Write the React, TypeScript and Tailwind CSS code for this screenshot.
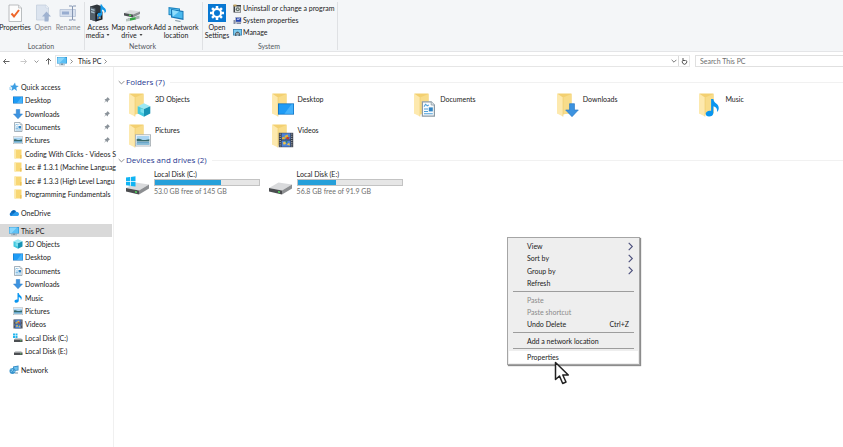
import type { ReactNode } from 'react';

type IconProps = { className?: string };

const small = 'size-[10px] shrink-0';

function MonitorIcon({ className = small }: IconProps) {
  return (
    <svg viewBox="0 0 20 20" className={className} aria-hidden="true">
      <rect x="0" y="2" width="20" height="13" fill="#2389c9" />
      <path d="M1 3h18v11H1z" fill="#5cc0f5" />
      <path d="M1 3h15L5 14H1z" fill="#8ad6fb" />
      <path d="M8 15h4v2H8zM4 17h12v1.500H4z" fill="#7c98ab" />
    </svg>
  );
}

function DesktopIcon({ className = small }: IconProps) {
  return (
    <svg viewBox="0 0 20 20" className={className} aria-hidden="true">
      <rect x="0" y="3" width="20" height="14" fill="#0f6fbd" />
      <rect x="1" y="4" width="18" height="12" fill="#1e9bf5" />
      <path d="M8 16L17 4h2v12z" fill="#45b2fb" />
    </svg>
  );
}

function DownArrowIcon({ className = small }: IconProps) {
  return (
    <svg viewBox="0 0 20 20" className={className} aria-hidden="true">
      <path d="M6.500 1h7v9H19l-9 9.500L1 10h5.500z" fill="#3c93e0" stroke="#2b7bc6" strokeWidth="1" />
    </svg>
  );
}

function DocumentIcon({ className = small }: IconProps) {
  return (
    <svg viewBox="0 0 20 20" className={className} aria-hidden="true">
      <path d="M3 1h11l4 4v14H3z" fill="#f8fbfd" stroke="#8b9aa5" strokeWidth="1.500" />
      <path d="M14 1v4h4" fill="#dfe6ea" stroke="#8b9aa5" />
      <path d="M5 7l2-3 2 2 2-1M5 10h5M5 13h5M5 16h11" stroke="#4fa0d8" strokeWidth="1.300" fill="none" />
      <rect x="11" y="8" width="5" height="5" fill="#3285c4" />
    </svg>
  );
}

function PictureIcon({ className = small }: IconProps) {
  return (
    <svg viewBox="0 0 20 20" className={className} aria-hidden="true">
      <rect x="0.500" y="3.500" width="19" height="14" fill="#fff" stroke="#a1a9ae" />
      <rect x="2" y="5" width="16" height="5" fill="#a9d4f2" />
      <path d="M2 9c4-2 6 1 9 1s5-1 7-1v3H2z" fill="#376a6b" />
      <rect x="2" y="12" width="16" height="4" fill="#6aa6c9" />
      <path d="M2 14h16v2H2z" fill="#8fc0da" />
    </svg>
  );
}

function MusicIcon({ className = small }: IconProps) {
  return (
    <svg viewBox="0 0 20 20" className={className} aria-hidden="true">
      <path d="M9 0h2.500c.5 5 6 5 6 10 0 2-.8 3.600-2 4.500.8-3.500-.8-5.500-4-6.500v7.500c0 2.500-2.300 4-4.800 4S3 18.300 3 16.500s2-3.500 4.500-3.500c.6 0 1 0 1.500.2z" fill="#0a96f0" />
    </svg>
  );
}

function VideoIcon({ className = small }: IconProps) {
  return (
    <svg viewBox="0 0 20 20" className={className} aria-hidden="true">
      <rect x="1" y="1" width="18" height="18" fill="#343a45" />
      <path d="M4.500 1.500h11v8h-11zM4.500 10.500h11v8h-11z" fill="#4c83d9" />
      <path d="M2.700 2v17M17.300 2v17" stroke="#d6d9df" strokeWidth="1.200" strokeDasharray="1.300 1.400" />
      <path d="M8 5l4-2 1 3-3 2zM5 7l3-1 1 3H5z" fill="#e2b434" />
      <path d="M11 6l4 1-2 2.500-3-1z" fill="#c23c2b" />
      <path d="M6 13l3-1 1 3-3 1zM11 16l3-3 1 4z" fill="#eec24b" />
      <path d="M9 11l3 1-1 2z" fill="#2c8551" />
    </svg>
  );
}

function CubeIcon({ className = small }: IconProps) {
  return (
    <svg viewBox="0 0 20 20" className={className} aria-hidden="true">
      <path d="M10 0.500l9 4-9 4-9-4z" fill="#9ce8f4" />
      <path d="M1 4.500l9 4v11l-9-4.500z" fill="#43c9df" />
      <path d="M19 4.500l-9 4v11l9-4.500z" fill="#1793b5" />
      <path d="M5 8l5 1v6l-5-2z" fill="#7bdfee" />
    </svg>
  );
}

function FolderFileIcon({ className = small }: IconProps) {
  return (
    <svg viewBox="0 0 20 20" className={className} aria-hidden="true">
      <path d="M3 1h14v18H3z" fill="#f8d775" />
      <path d="M3 1h3v18H3z" fill="#fce9a9" />
      <path d="M14 12h3v7h-3z" fill="#eec45a" />
    </svg>
  );
}

function DriveIcon({ className = small, windows = false }: IconProps & { windows?: boolean }) {
  return (
    <svg viewBox="0 0 48 40" className={className} aria-hidden="true">
      <path d="M1 26L20 15l27 4-20 12z" fill="#d9dadc" />
      <path d="M1 26l26 5v8L1 33z" fill="#4b4d50" />
      <path d="M27 31l20-12v8L27 39z" fill="#8d8f92" />
      <path d="M19 32l4 1v3l-4-1z" fill="#50dd5d" />
      {windows && <path d="M1 5l8-1v8H1zM10.500 3.800L20 2.500V12h-9.500zM1 13.500h8v8l-8-1zM10.500 13.500H20V23l-9.500-1.200z" fill="#11b4f3" />}
    </svg>
  );
}

function SmallDriveIcon({ windows = false }: { windows?: boolean }) {
  return (
    <svg viewBox="0 0 20 20" className={small} aria-hidden="true">
      <path d="M5 10h11l3 3H2z" fill="#c9cbce" />
      <path d="M2 13h17v5H2z" fill="#4c4f52" />
      <path d="M14 15.500h3" stroke="#61da6a" strokeWidth="1.500" />
      {windows && <path d="M0 1h4v4H0zM5 1h4v4H5zM0 6h4v4H0zM5 6h4v4H5z" fill="#23b5ee" />}
    </svg>
  );
}

function StarIcon() {
  return (
    <svg viewBox="0 0 20 20" className={small} aria-hidden="true">
      <path d="M12 1l1.500 6 6 1-5 3.500 1.500 6.500-5.500-4L5 18l1.500-6.500L2 7.500l6-.5z" fill="#3c9ee3" />
      <path d="M0 12h5M1 15h4" stroke="#77bdec" strokeWidth="1.500" />
    </svg>
  );
}

function CloudIcon() {
  return (
    <svg viewBox="0 0 20 20" className={small} aria-hidden="true">
      <path d="M4 16a4 4 0 010-7.500A6 6 0 0115 8a4.200 4.200 0 011 8z" fill="#1177cf" />
      <path d="M4 16l8-7c4-2 8 0 8 3.500 0 2-1.500 3.500-3.500 3.500z" fill="#2b9cec" />
      <path d="M4 8.500A6 6 0 0113 5.500l-3 4z" fill="#0760ae" />
    </svg>
  );
}

function NetworkIcon() {
  return (
    <svg viewBox="0 0 20 20" className={small} aria-hidden="true">
      <path d="M8 3l11-2v10L8 12z" fill="#2f86c0" />
      <path d="M9.500 4.500l8-1.500v6.500l-8 1z" fill="#6cc1ee" />
      <circle cx="7" cy="12" r="6" fill="#3a94cd" />
      <path d="M3 9c3-3 5 0 4 2s-3 1-3 3M9 13l3-1" stroke="#a2def7" strokeWidth="1.600" fill="none" />
      <path d="M12 15h6v2h-6z" fill="#7890a0" />
    </svg>
  );
}

function PinIcon() {
  return (
    <svg viewBox="0 0 12 12" className="size-[6px] shrink-0" aria-hidden="true">
      <path d="M7 0l5 5-1.500.5L8 8l-.5 3L4 8l-4 4 3-5L1 4.500 4 4l2.500-2.500z" fill="#8b939a" />
    </svg>
  );
}

function BigFolder({ children }: { children: ReactNode }) {
  return (
    <span className="relative block h-[25px] w-[22px] shrink-0">
      <svg viewBox="0 0 44 50" className="h-[25px] w-[22px]" aria-hidden="true">
        <path d="M3 1h28v40H3z" fill="#f3d071" />
        <path d="M31 2v38l-17 3V9z" fill="#f8dc8a" />
        <path d="M2 1l12 8v38L2 41z" fill="#fde9ae" />
        <path d="M14 9v38" stroke="#e9c45f" strokeWidth="1" />
      </svg>
      <span className="absolute -right-px bottom-px block">{children}</span>
    </span>
  );
}

function Chevron({ dir, className }: { dir: 'right' | 'down'; className: string }) {
  return (
    <svg viewBox="0 0 10 10" className={className} fill="none" stroke="currentColor" aria-hidden="true">
      <path d={dir === 'right' ? 'M3 1l4 4-4 4' : 'M1 3l4 4 4-4'} strokeWidth="1.200" />
    </svg>
  );
}

function PropertiesArt() {
  return (
    <svg viewBox="0 0 36 36" className="size-[18px]" aria-hidden="true">
      <path d="M6 2h19l6 6v27H6z" fill="#fcfcfc" stroke="#a6a9ac" strokeWidth="1.500" />
      <path d="M25 2v6h6" fill="#e8e8e8" stroke="#a6a9ac" />
      <path d="M11 19l5 6 10-13" fill="none" stroke="#ee6528" strokeWidth="4" />
    </svg>
  );
}

function OpenArt() {
  return (
    <svg viewBox="0 0 36 36" className="size-[18px]" aria-hidden="true">
      <path d="M5 2h19l5 5v25H5z" fill="#dce4ef" stroke="#c3cddc" strokeWidth="1.500" />
      <path d="M24 2v6h5" fill="#f3f6fa" stroke="#c3cddc" />
      <path d="M25 15l9 10h-5v10h-8V25h-5z" fill="#9fb2d0" />
    </svg>
  );
}

function RenameArt() {
  return (
    <svg viewBox="0 0 36 36" className="size-[18px]" aria-hidden="true">
      <path d="M2 11h31v14H2z" fill="#d7e0ee" stroke="#b1bfd4" strokeWidth="1.500" />
      <path d="M6 15h14v6H6z" fill="#98add0" />
      <path d="M20 4h5q2 0 2 2v24q0 2 2 2h4M34 4h-5q-2 0-2 2M27 30q0 2-2 2h-5" stroke="#8495b2" strokeWidth="2" fill="none" />
    </svg>
  );
}

function MediaArt() {
  return (
    <svg viewBox="0 0 36 36" className="size-[18px]" aria-hidden="true">
      <path d="M2 5l14-4 8 3v26l-10 5-12-4z" fill="#30363c" />
      <path d="M2 5l11 4v25L2 31z" fill="#55616b" />
      <path d="M4 9l7 2v3l-7-2zM4 14l7 2v3l-7-2z" fill="#a5bdcb" />
      <path d="M13 18l14-3v16l-14 4z" fill="#1c2026" />
      <path d="M16 20l8-2v11l-8 2z" fill="#336ca4" />
      <path d="M16 20l3 2-3 3zM21 25l3 4h-5z" fill="#d7a84c" />
      <path d="M23 1h3c0 6 9 6 8 14l-3 4c1-5-1-7-5-8v9c0 6-9 5-9 1 0-3 3-4 6-3z" fill="#159bea" />
    </svg>
  );
}

function MapDriveArt() {
  return (
    <svg viewBox="0 0 36 36" className="size-[18px]" aria-hidden="true">
      <path d="M2 18l12-6 20 3-14 6z" fill="#d9dcdd" />
      <path d="M2 18l18 3v6L2 23z" fill="#4d5154" />
      <path d="M20 21l14-6v5l-14 7z" fill="#8b8f92" />
      <path d="M12 22l4 1" stroke="#55d85c" strokeWidth="3" />
      <path d="M10 29l16-3v5l-15 3z" fill="#35a844" />
      <path d="M6 30l8-2v6l-8 1z" fill="#b9c4c1" />
      <path d="M25 25l8-2v6l-8 2z" fill="#a8b4b0" />
    </svg>
  );
}

function AddLocationArt() {
  return (
    <svg viewBox="0 0 36 36" className="size-[18px]" aria-hidden="true">
      <path d="M3 6l23 3v17L3 22z" fill="#1f86c2" />
      <path d="M5 9l19 2v12L5 20z" fill="#62c9f5" />
      <path d="M8 10l25 4v18L8 27z" fill="#1876b5" />
      <path d="M10 12l21 4v13l-21-4z" fill="#4ab9ee" />
      <path d="M10 12l14 3-12 10z" fill="#91ddfb" />
      <path d="M17 32l10 2v2l-11-2z" fill="#8295a2" />
    </svg>
  );
}

function SettingsArt() {
  return (
    <svg viewBox="0 0 36 36" className="size-[18px]" aria-hidden="true">
      <rect width="36" height="36" fill="#0878d3" />
      <g stroke="#fff" strokeWidth="5">
        <path d="M18 4v6M18 26v6M4 18h6M26 18h6M8.100 8.100l4.200 4.200M23.700 23.700l4.200 4.200M8.100 27.900l4.200-4.200M23.700 12.300l4.200-4.200" />
      </g>
      <circle cx="18" cy="18" r="8" fill="none" stroke="#fff" strokeWidth="4" />
    </svg>
  );
}

function UninstallArt() {
  return (
    <svg viewBox="0 0 18 18" className="size-[9px] shrink-0" aria-hidden="true">
      <path d="M1 2h15v15H1z" fill="#3c4043" />
      <path d="M1 1h6v4H1z" fill="#c4a55e" />
      <path d="M4 5h11v11H4z" fill="#d8dcdc" />
      <circle cx="9.500" cy="10.500" r="4" fill="#65736b" />
      <circle cx="9.500" cy="10.500" r="1.500" fill="#fff" />
    </svg>
  );
}

function SystemArt() {
  return (
    <svg viewBox="0 0 18 18" className="size-[9px] shrink-0" aria-hidden="true">
      <path d="M4 2h13v11H4z" fill="#b8bec8" />
      <path d="M6 3.500h10v8H6z" fill="#2344b4" />
      <path d="M8 8l2-3 1 2 3-2" stroke="#fff" strokeWidth="1.500" fill="none" />
      <path d="M1 8h4v8H1zM7 13h9v3H7z" fill="#8790a5" />
    </svg>
  );
}

function ManageArt() {
  return (
    <svg viewBox="0 0 18 18" className="size-[9px] shrink-0" aria-hidden="true">
      <path d="M0 2h18v13H0z" fill="#357dac" />
      <path d="M1.500 3.500h15v10h-15z" fill="#7ccbf0" />
      <path d="M4 11q5-8 10 0v5h-3v-3H7v3H4z" fill="#526570" />
      <path d="M6 11h6v1.500H6z" fill="#e7edef" />
    </svg>
  );
}

function RibbonButton({ icon, lines, className, menu, disabled }: { icon: ReactNode; lines: string[]; className: string; menu?: boolean; disabled?: boolean }) {
  return (
    <button disabled={disabled} className={`flex shrink-0 flex-col items-center gap-[1px] text-center whitespace-nowrap disabled:text-[#7d8085] ${className}`}>
      {icon}
      <span className="flex flex-col leading-[8px]">
        {lines.map((line, i) => (
          <span key={line} className="flex items-center justify-center gap-[2px]">
            {line}
            {menu && i === lines.length - 1 && <Caret />}
          </span>
        ))}
      </span>
    </button>
  );
}

function RibbonGroup({ label, children, className = '' }: { label: string; children: ReactNode; className?: string }) {
  return (
    <section aria-label={label} className={`flex flex-col justify-between border-r border-[#dfe1e4] ${className}`}>
      <div className="flex items-start">{children}</div>
      <div className="pr-[2px] text-center leading-[8px] text-[#55595e]">{label}</div>
    </section>
  );
}

const systemActions = [
  { label: 'Uninstall or change a program', icon: <UninstallArt /> },
  { label: 'System properties', icon: <SystemArt /> },
  { label: 'Manage', icon: <ManageArt /> },
];

function Ribbon() {
  return (
    <div className="flex h-[52px] border-b border-[#e4e5e7] bg-[#f4f6f8] pt-[2px] pb-px">
      <RibbonGroup label="Location" className="w-[85px]">
        <RibbonButton icon={<PropertiesArt />} lines={['Properties']} className="w-[30px] pt-[2px]" />
        <RibbonButton icon={<OpenArt />} lines={['Open']} className="w-[26px] pt-[2px]" disabled />
        <RibbonButton icon={<RenameArt />} lines={['Rename']} className="w-[24px] pt-[2px]" disabled />
      </RibbonGroup>
      <RibbonGroup label="Network" className="w-[118px]">
        <RibbonButton icon={<MediaArt />} lines={['Access', 'media']} menu className="w-[26px] pt-[2px]" />
        <RibbonButton icon={<MapDriveArt />} lines={['Map network', 'drive']} menu className="w-[42px] pt-[2px]" />
        <RibbonButton icon={<AddLocationArt />} lines={['Add a network', 'location']} className="w-[46px] pt-[2px]" />
      </RibbonGroup>
      <RibbonGroup label="System" className="w-[135px]">
        <RibbonButton icon={<SettingsArt />} lines={['Open', 'Settings']} className="w-[28px] pt-[2px]" />
        <div className="flex flex-col pl-[2px]">
          {systemActions.map((a) => (
            <button key={a.label} className="flex h-[12px] items-center gap-px whitespace-nowrap">
              {a.icon}
              {a.label}
            </button>
          ))}
        </div>
      </RibbonGroup>
    </div>
  );
}

function Caret() {
  return (
    <svg viewBox="0 0 6 4" className="h-[2px] w-[4px]" aria-hidden="true">
      <path d="M0 0h6L3 4z" fill="#444" />
    </svg>
  );
}

function Arrow({ className }: { className: string }) {
  return (
    <svg viewBox="0 0 14 14" className={`size-[7px] ${className}`} fill="none" stroke="currentColor" strokeWidth="1.800" aria-hidden="true">
      <path d="M13 7H1M6 2L1 7l5 5" />
    </svg>
  );
}

function AddressRow() {
  return (
    <div className="flex h-[15px] items-stretch pt-[3px]">
      <nav aria-label="History" className="flex w-[55px] shrink-0 items-center text-[#555]">
        <button aria-label="Back" className="ml-[3px]"><Arrow className="" /></button>
        <button aria-label="Forward" className="ml-[10px] text-[#c4c4c4]"><Arrow className="rotate-180" /></button>
        <button aria-label="Recent locations" className="ml-[7px]"><Chevron dir="down" className="size-[5px]" /></button>
        <button aria-label="Up" className="ml-[6px]"><Arrow className="rotate-90" /></button>
      </nav>
      <div className="flex flex-1 items-center border border-[#e6e6e6] pl-px">
        <MonitorIcon />
        <Chevron dir="right" className="ml-[2px] size-[5px] text-[#444]" />
        <button className="ml-[4px]">This PC</button>
        <Chevron dir="right" className="ml-[2px] size-[5px] text-[#444]" />
        <button aria-label="Previous locations" className="mr-px ml-auto text-[#444]"><Chevron dir="down" className="size-[6px]" /></button>
        <button aria-label="Refresh" className="flex h-full w-[11px] items-center justify-center border-l border-[#dadada] text-[#444]">
          <svg viewBox="0 0 14 14" className="size-[7px]" fill="none" stroke="currentColor" strokeWidth="1.800" aria-hidden="true">
            <path d="M4 4.500a4.500 4.500 0 106 0M4 0v5h5" />
          </svg>
        </button>
      </div>
      <input
        type="search"
        aria-label="Search This PC"
        placeholder="Search This PC"
        className="ml-[5px] w-[148px] border border-r-0 border-[#e0e0e0] bg-white pl-[4px] outline-none placeholder:text-[#6d6d6d]"
      />
    </div>
  );
}

type NavItem = { label: string; icon: ReactNode; pinned?: boolean };

const quickItems: NavItem[] = [
  { label: 'Desktop', icon: <DesktopIcon />, pinned: true },
  { label: 'Downloads', icon: <DownArrowIcon />, pinned: true },
  { label: 'Documents', icon: <DocumentIcon />, pinned: true },
  { label: 'Pictures', icon: <PictureIcon />, pinned: true },
  { label: 'Coding With Clicks - Videos S', icon: <FolderFileIcon /> },
  { label: 'Lec # 1.3.1 (Machine Languag', icon: <FolderFileIcon /> },
  { label: 'Lec # 1.3.3 (High Level Langu', icon: <FolderFileIcon /> },
  { label: 'Programming Fundamentals', icon: <FolderFileIcon /> },
];

const pcItems: NavItem[] = [
  { label: '3D Objects', icon: <CubeIcon /> },
  { label: 'Desktop', icon: <DesktopIcon /> },
  { label: 'Documents', icon: <DocumentIcon /> },
  { label: 'Downloads', icon: <DownArrowIcon /> },
  { label: 'Music', icon: <MusicIcon /> },
  { label: 'Pictures', icon: <PictureIcon /> },
  { label: 'Videos', icon: <VideoIcon /> },
  { label: 'Local Disk (C:)', icon: <SmallDriveIcon windows /> },
  { label: 'Local Disk (E:)', icon: <SmallDriveIcon /> },
];

function NavRow({ item, root, selected }: { item: NavItem; root?: boolean; selected?: boolean }) {
  return (
    <button className={`flex w-full min-w-0 items-center text-left ${root ? 'gap-[2px] pl-[9px]' : 'gap-[2px] pl-[13px]'} ${selected ? 'bg-[#d9d9d9]' : ''}`}>
      {item.icon}
      <span className="min-w-0 flex-1 whitespace-nowrap">{item.label}</span>
      {item.pinned && <span className="pr-[2px]"><PinIcon /></span>}
    </button>
  );
}

function Sidebar() {
  return (
    <nav aria-label="Folders" className="flex w-[114px] shrink-0 flex-col gap-[5px] border-r border-[#f0f0f0] pt-[13px] pr-px">
      <div className="grid h-[121px] auto-rows-fr grid-cols-1">
        <NavRow root item={{ label: 'Quick access', icon: <StarIcon /> }} />
        {quickItems.map((i) => <NavRow key={i.label} item={i} />)}
      </div>
      <div className="grid h-[13px] grid-cols-1">
        <NavRow root item={{ label: 'OneDrive', icon: <CloudIcon /> }} />
      </div>
      <div className="grid h-[134px] auto-rows-fr grid-cols-1">
        <NavRow root selected item={{ label: 'This PC', icon: <MonitorIcon /> }} />
        {pcItems.map((i) => <NavRow key={i.label} item={i} />)}
      </div>
      <div className="grid h-[13px] grid-cols-1">
        <NavRow root item={{ label: 'Network', icon: <NetworkIcon /> }} />
      </div>
    </nav>
  );
}

const overlay = 'size-[14px]';

const folders = [
  { label: '3D Objects', icon: <CubeIcon className={overlay} /> },
  { label: 'Desktop', icon: <DesktopIcon className="size-[16px]" /> },
  { label: 'Documents', icon: <DocumentIcon className="size-[16px]" /> },
  { label: 'Downloads', icon: <DownArrowIcon className={overlay} /> },
  { label: 'Music', icon: <MusicIcon className="size-[18px]" /> },
  { label: 'Pictures', icon: <PictureIcon className="size-[16px]" /> },
  { label: 'Videos', icon: <VideoIcon className="size-[16px]" /> },
];

const drives = [
  { label: 'Local Disk (C:)', free: '53.0 GB free of 145 GB', used: 63, windows: true },
  { label: 'Local Disk (E:)', free: '56.8 GB free of 91.9 GB', used: 37, windows: false },
];

function SectionTitle({ children }: { children: ReactNode }) {
  return (
    <h2 className="flex h-[12px] items-center gap-px pl-[4px] font-['Open_Sans','Noto_Sans',sans-serif] text-[8px] text-[#28388f]">
      <Chevron dir="down" className="size-[7px] text-[#777]" />
      {children}
      <span className="ml-[4px] h-px flex-1 bg-[#f1f1f1]" />
    </h2>
  );
}

function Content() {
  return (
    <main className="min-w-0 flex-1 pt-[9px]">
      <SectionTitle>Folders (7)</SectionTitle>
      <div className="mt-[5px] grid grid-cols-5 gap-y-[6px] pr-[2px] pl-[14px]">
        {folders.map((f) => (
          <button key={f.label} className="flex h-[25px] items-start gap-[5px] text-left">
            <BigFolder>{f.icon}</BigFolder>
            <span className="pt-px leading-[10px]">{f.label}</span>
          </button>
        ))}
      </div>
      <div className="mt-[5px]">
        <SectionTitle>Devices and drives (2)</SectionTitle>
      </div>
      <div className="mt-[3px] grid grid-cols-5 pr-[2px] pl-[14px]">
        {drives.map((d) => (
          <button key={d.label} className="flex items-start gap-[4px] text-left">
            <DriveIcon windows={d.windows} className="mt-[6px] -ml-[3px] h-[20px] w-[25px] shrink-0" />
            <span className="block w-[106px]">
              <span className="block leading-[10px]">{d.label}</span>
              <span role="meter" aria-label={`${d.label} space used`} aria-valuemin={0} aria-valuemax={100} aria-valuenow={d.used} className="block h-[7px] border border-[#c3c3c3] bg-[#e6e6e6]">
                <span className="block h-full bg-[#26a0da]" style={{ width: `${d.used}%` }} />
              </span>
              <span className="block leading-[10px] text-[#6d6d6d]">{d.free}</span>
            </span>
          </button>
        ))}
      </div>
    </main>
  );
}

type MenuEntry = { label: string; sub?: boolean; disabled?: boolean; keys?: string; active?: boolean };

function MenuItem({ entry }: { entry: MenuEntry }) {
  return (
    <button
      role="menuitem"
      disabled={entry.disabled}
      className={`flex items-center pr-[3px] pl-[18px] text-left disabled:text-[#8a8a8a] ${entry.active ? 'bg-white' : ''}`}
    >
      <span className="flex-1">{entry.label}</span>
      {entry.keys && <span className="pr-[6px]">{entry.keys}</span>}
      {entry.sub && <Chevron dir="right" className="size-[9px] text-[#4b4f7c]" />}
    </button>
  );
}

function MenuRule() {
  return <hr className="mx-[4px] my-[2px] border-[#9d9d9d]" />;
}

function ContextMenu() {
  return (
    <div role="menu" className="absolute top-[237px] left-[507px] w-[133px] border border-[#a5a5a5] bg-[#eeeeee] px-px pt-[2px] pb-px shadow-[1px_1px_1px_#8c8c8c]">
      <div className="grid h-[49px] auto-rows-fr">
        <MenuItem entry={{ label: 'View', sub: true }} />
        <MenuItem entry={{ label: 'Sort by', sub: true }} />
        <MenuItem entry={{ label: 'Group by', sub: true }} />
        <MenuItem entry={{ label: 'Refresh' }} />
      </div>
      <MenuRule />
      <div className="grid h-[36px] auto-rows-fr">
        <MenuItem entry={{ label: 'Paste', disabled: true }} />
        <MenuItem entry={{ label: 'Paste shortcut', disabled: true }} />
        <MenuItem entry={{ label: 'Undo Delete', keys: 'Ctrl+Z' }} />
      </div>
      <MenuRule />
      <div className="grid h-[11px]">
        <MenuItem entry={{ label: 'Add a network location' }} />
      </div>
      <MenuRule />
      <div className="grid h-[12px]">
        <MenuItem entry={{ label: 'Properties', active: true }} />
      </div>
    </div>
  );
}

function Cursor() {
  return (
    <svg viewBox="0 0 16 25" className="absolute top-[361px] left-[554px] h-[25px] w-[16px]" aria-hidden="true">
      <path d="M1.500 1.500v17l4-3.500 3.200 7.500 3.300-1.500-3.200-7h5.500z" fill="#fff" stroke="#222" strokeWidth="1.500" strokeLinejoin="round" />
    </svg>
  );
}

export default function App() {
  return (
    <div className="relative flex min-h-screen flex-col overflow-hidden bg-white font-['Lato','Open_Sans',sans-serif] text-[7px] leading-[10px] text-[#1a1a1a]">
      <Ribbon />
      <AddressRow />
      <div className="flex flex-1">
        <Sidebar />
        <Content />
      </div>
      <ContextMenu />
      <Cursor />
    </div>
  );
}
